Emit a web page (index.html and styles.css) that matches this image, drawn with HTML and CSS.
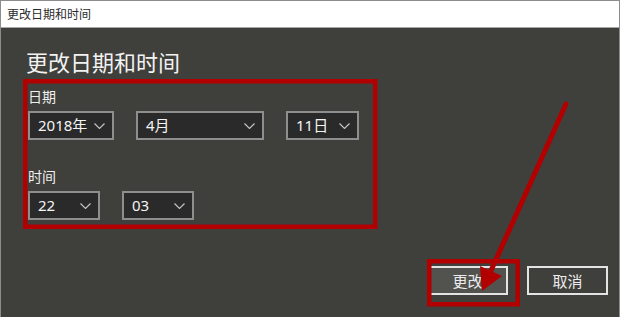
FILE: index.html
```html
<!DOCTYPE html>
<html lang="zh-CN">
<head>
<meta charset="utf-8">
<title>更改日期和时间</title>
<link rel="stylesheet" href="styles.css">
</head>
<body>
<div class="window">
  <div class="titlebar">更改日期和时间</div>
  <div class="content">
    <h1 class="heading">更改日期和时间</h1>
    <div class="label">日期</div>
    <div class="row">
      <div class="select w-year"><span>2018年</span><svg class="chev" viewBox="0 0 11 6"><path d="M0.5 0.5 L5.5 5.5 L10.5 0.5"/></svg></div>
      <div class="select w-month"><span>4月</span><svg class="chev" viewBox="0 0 11 6"><path d="M0.5 0.5 L5.5 5.5 L10.5 0.5"/></svg></div>
      <div class="select w-day"><span>11日</span><svg class="chev" viewBox="0 0 11 6"><path d="M0.5 0.5 L5.5 5.5 L10.5 0.5"/></svg></div>
    </div>
    <div class="label label-time">时间</div>
    <div class="row row-time">
      <div class="select w-time"><span>22</span><svg class="chev" viewBox="0 0 11 6"><path d="M0.5 0.5 L5.5 5.5 L10.5 0.5"/></svg></div>
      <div class="select w-time"><span>03</span><svg class="chev" viewBox="0 0 11 6"><path d="M0.5 0.5 L5.5 5.5 L10.5 0.5"/></svg></div>
    </div>
    <div class="actions">
      <button class="btn btn-primary">更改</button>
      <button class="btn">取消</button>
    </div>
  </div>
  <svg class="annot" viewBox="0 0 620 317" width="620" height="317">
    <rect x="25.25" y="81.25" width="350" height="145.5" fill="none" stroke="#b20000" stroke-width="4.5"/>
    <rect x="429.25" y="261.25" width="88.5" height="43" fill="none" stroke="#b20000" stroke-width="4.5"/>
    <line x1="566" y1="104" x2="489" y2="275" stroke="#b20000" stroke-width="5" stroke-linecap="round"/>
    <polygon points="482,291 502,276 480,266" fill="#b20000"/>
  </svg>
</div>
</body>
</html>
```

FILE: styles.css
```css
* { box-sizing: border-box; }
html, body { margin: 0; padding: 0; }
body {
  width: 620px;
  height: 317px;
  overflow: hidden;
  background: #3f3f3b;
  font-family: "Noto Sans", "Noto Sans CJK SC", sans-serif;
}
.window {
  position: relative;
  width: 620px;
  height: 317px;
  border: 1px solid #8c8c8c;
  border-bottom: none;
  background: #3f3f3b;
  display: flex;
  flex-direction: column;
}
.titlebar {
  height: 27px;
  line-height: 26px;
  background: #ffffff;
  border-bottom: 1px solid #a8a8a8;
  padding-left: 6px;
  font-size: 12px;
  color: #2b2b2b;
  font-family: "Noto Sans CJK SC", sans-serif;
}
.content {
  flex: 1;
  display: flex;
  flex-direction: column;
  padding: 0 11px 22px 27px;
}
.heading {
  margin: 18px 0 0 -2px;
  font-size: 22px;
  line-height: 30px;
  font-weight: 400;
  color: #f2f2f2;
  font-family: "Noto Sans CJK SC", sans-serif;
}
.label {
  margin-top: 10px;
  font-size: 14px;
  line-height: 20px;
  color: #f0f0f0;
  font-family: "Noto Sans CJK SC", sans-serif;
}
.label-time { margin-top: 26px; }
.row {
  display: flex;
  margin-top: 5px;
}
.row .select + .select { margin-left: 22px; }
.row-time .select + .select { margin-left: 22px; }
.select {
  height: 29px;
  border: 2px solid #8e8e8e;
  background: #2a2a2a;
  display: flex;
  align-items: center;
  justify-content: space-between;
  padding: 0 7px 0 8px;
  color: #f4f4f4;
  font-size: 15px;
}
.select span { line-height: 25px; }
.w-year { width: 86px; }
.w-month { width: 128px; }
.w-day { width: 73px; }
.w-time { width: 72px; }
.chev {
  width: 11px;
  height: 6px;
  fill: none;
  stroke: #c8c8c8;
  stroke-width: 1.1;
}
.actions {
  margin-top: auto;
  display: flex;
  justify-content: flex-end;
  gap: 19px;
}
.btn {
  width: 81px;
  height: 29px;
  border: 2px solid #e4e4e4;
  background: #3f3f3b;
  color: #ececec;
  font-size: 15px;
  font-family: "Noto Sans CJK SC", sans-serif;
  padding: 0;
}
.btn-primary { background: #52524f; }
.annot {
  position: absolute;
  left: -1px;
  top: -1px;
  pointer-events: none;
}
```
